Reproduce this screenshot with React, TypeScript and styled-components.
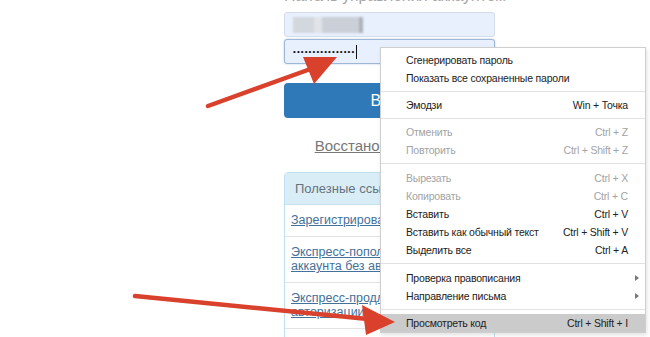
import React from 'react';
import styled, {createGlobalStyle} from 'styled-components';

const GlobalStyle = createGlobalStyle`
  html, body {
    margin: 0;
    padding: 0;
    background: #fff;
    overflow: hidden;
  }
  body {
    font-family: "Liberation Sans", Arial, sans-serif;
  }
`;

type MenuEntry =
  | {kind: 'sep', wide?: boolean}
  | {kind: 'item', label: string, hint?: string, disabled?: boolean, sub?: boolean, active?: boolean};

const menu: MenuEntry[] = [
  {kind: 'item', label: 'Сгенерировать пароль'},
  {kind: 'item', label: 'Показать все сохраненные пароли'},
  {kind: 'sep'},
  {kind: 'item', label: 'Эмодзи', hint: 'Win + Точка'},
  {kind: 'sep'},
  {kind: 'item', label: 'Отменить', hint: 'Ctrl + Z', disabled: true},
  {kind: 'item', label: 'Повторить', hint: 'Ctrl + Shift + Z', disabled: true},
  {kind: 'sep', wide: true},
  {kind: 'item', label: 'Вырезать', hint: 'Ctrl + X', disabled: true},
  {kind: 'item', label: 'Копировать', hint: 'Ctrl + C', disabled: true},
  {kind: 'item', label: 'Вставить', hint: 'Ctrl + V'},
  {kind: 'item', label: 'Вставить как обычный текст', hint: 'Ctrl + Shift + V'},
  {kind: 'item', label: 'Выделить все', hint: 'Ctrl + A'},
  {kind: 'sep', wide: true},
  {kind: 'item', label: 'Проверка правописания', sub: true},
  {kind: 'item', label: 'Направление письма', sub: true},
  {kind: 'sep'},
  {kind: 'item', label: 'Просмотреть код', hint: 'Ctrl + Shift + I', active: true},
];

const links = [
  'Зарегистрировать аккаунт',
  'Экспресс-пополнение баланса аккаунта без авторизации',
  'Экспресс-продление без авторизации',
  'Инструкции',
];

const App: React.FC = () => {
  return (
    <Page>
      <GlobalStyle/>
      <Column>
        <Heading>Панель управления аккаунтом</Heading>
        <Field>
          <BlurredLogin/>
        </Field>
        <Field focused>
          <Dots>••••••••••••••••</Dots>
          <Caret/>
        </Field>
        <LoginButton>Войти</LoginButton>
        <Restore href="#">Восстановить пароль</Restore>
        <Panel>
          <PanelHead>Полезные ссылки</PanelHead>
          {links.map(text => (
            <PanelRow key={text}>
              <PanelLink href="#">{text}</PanelLink>
            </PanelRow>
          ))}
        </Panel>
      </Column>

      <Menu>
        {menu.map((entry, i) =>
          entry.kind === 'sep'
            ? <Separator key={i} wide={entry.wide}/>
            : (
              <MenuItem key={i} disabled={entry.disabled} active={entry.active}>
                <span>{entry.label}</span>
                {entry.hint && <span>{entry.hint}</span>}
                {entry.sub && <SubArrow/>}
              </MenuItem>
            )
        )}
      </Menu>

      <Arrows width="650" height="337" viewBox="0 0 650 337">
        <line x1="208" y1="106" x2="316" y2="67" stroke="#d9412c" strokeWidth="4.5" strokeLinecap="round"/>
        <polygon points="337,57 303,57 314,84" fill="#d9412c"/>
        <line x1="135" y1="296" x2="368" y2="319" stroke="#d9412c" strokeWidth="4.5" strokeLinecap="round"/>
        <polygon points="395,322 362,305 366,335" fill="#d9412c"/>
      </Arrows>
    </Page>
  );
};

const Page = styled.div`
  position: relative;
  width: 650px;
  height: 337px;
  overflow: hidden;
`;
const Column = styled.div`
  display: flex;
  flex-direction: column;
  width: 211px;
  margin-left: 284px;
`;
const Heading = styled.div`
  margin-top: -14px;
  height: 20px;
  font-size: 16px;
  line-height: 20px;
  color: #a5a5a5;
  white-space: nowrap;
  letter-spacing: -0.2px;
`;
const Field = styled.div<{focused?: boolean}>`
  display: flex;
  align-items: center;
  box-sizing: border-box;
  height: 25px;
  margin-top: ${p => p.focused ? '2px' : '6px'};
  padding: 0 8px;
  background: #e8f0fe;
  border: 1px solid ${p => p.focused ? '#9fb7d6' : '#d3dceb'};
  border-radius: 3px;
  box-shadow: ${p => p.focused ? '0 0 2px rgba(102, 140, 200, 0.5)' : 'none'};
`;
const BlurredLogin = styled.div`
  width: 70px;
  height: 16px;
  background: linear-gradient(90deg, #d3d7de 0 30%, #e0e3e8 30% 42%, #cbcfd7 42% 94%, #aeb2ba 94% 100%);
  filter: blur(0.8px);
`;
const Dots = styled.span`
  font-size: 8px;
  letter-spacing: 1.1px;
  color: #111;
  line-height: 10px;
`;
const Caret = styled.span`
  width: 1px;
  height: 14px;
  margin-left: 1px;
  background: #111;
`;
const LoginButton = styled.div`
  display: flex;
  align-items: center;
  justify-content: center;
  height: 35px;
  margin-top: 19px;
  padding-left: 7px;
  border-radius: 4px;
  background: #3079b9;
  color: #fff;
  font-size: 16px;
`;
const Restore = styled.a`
  align-self: center;
  margin-top: 20px;
  font-size: 15px;
  line-height: 16px;
  color: #777;
  text-decoration: underline;
  white-space: nowrap;
`;
const Panel = styled.div`
  margin-top: 18px;
  border: 1px solid #bfe0ee;
  border-radius: 4px;
  background: #fff;
`;
const PanelHead = styled.div`
  height: 31px;
  padding: 0 10px;
  display: flex;
  align-items: center;
  background: #d9edf7;
  border-bottom: 1px solid #c7e2ee;
  font-size: 13px;
  color: #66737d;
  white-space: nowrap;
  overflow: hidden;
`;
const PanelRow = styled.div`
  padding: 8px 6px 9px;
  border-bottom: 1px solid #e3e3e3;
  font-size: 12.5px;
  line-height: 14px;
`;
const PanelLink = styled.a`
  color: #44709a;
  text-decoration: underline;
`;

const Menu = styled.div`
  position: absolute;
  left: 380px;
  top: 47px;
  width: 264px;
  padding-top: 3px;
  background: #fff;
  border: 1px solid #cfcfcf;
  box-shadow: 1px 2px 4px rgba(0, 0, 0, 0.12);
  font-size: 10.5px;
  letter-spacing: -0.2px;
  color: #222;
`;
const MenuItem = styled.div<{disabled?: boolean, active?: boolean}>`
  position: relative;
  display: flex;
  align-items: center;
  justify-content: space-between;
  height: 18px;
  padding: 0 17px 0 25px;
  color: ${p => p.disabled ? '#a3a3a3' : '#222'};
  background: ${p => p.active ? '#cbcbcb' : 'transparent'};
  white-space: nowrap;
`;
const SubArrow = styled.span`
  position: absolute;
  right: 6px;
  top: 6px;
  width: 0;
  height: 0;
  border-top: 3px solid transparent;
  border-bottom: 3px solid transparent;
  border-left: 4px solid #777;
`;
const Separator = styled.div<{wide?: boolean}>`
  height: 1px;
  margin: 4px 0 ${p => p.wide ? '5px' : '4px'};
  background: #e2e2e2;
`;
const Arrows = styled.svg`
  position: absolute;
  left: 0;
  top: 0;
  pointer-events: none;
`;

export default App;
